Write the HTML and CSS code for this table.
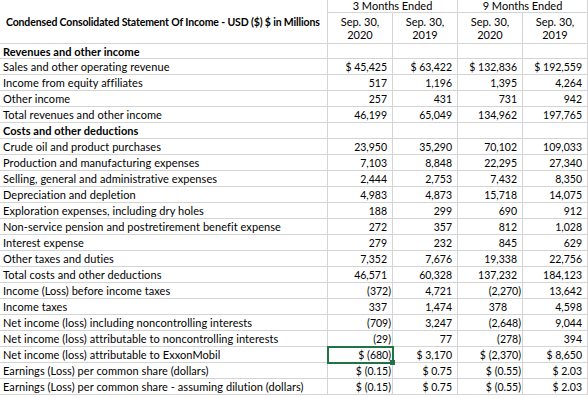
FILE: index.html
```html
<!DOCTYPE html>
<html lang="en">
<head>
<meta charset="utf-8">
<title>Condensed Consolidated Statement Of Income</title>
<link rel="stylesheet" href="styles.css">
</head>
<body>
<div class="sheet">
  <div class="c title">Condensed Consolidated Statement Of Income - USD ($) $ in Millions</div>
  <div class="c grp">3 Months Ended</div>
  <div class="c grp">9 Months Ended</div>
  <div class="c date">Sep. 30,<br>2020</div>
  <div class="c date">Sep. 30,<br>2019</div>
  <div class="c date">Sep. 30,<br>2020</div>
  <div class="c date">Sep. 30,<br>2019</div>

  <div class="c lab b">Revenues and other income</div><div class="c num"></div><div class="c num"></div><div class="c num"></div><div class="c num"></div>
  <div class="c lab">Sales and other operating revenue</div><div class="c num">$ 45,425</div><div class="c num">$ 63,422</div><div class="c num">$ 132,836</div><div class="c num">$ 192,559</div>
  <div class="c lab">Income from equity affiliates</div><div class="c num">517</div><div class="c num">1,196</div><div class="c num">1,395</div><div class="c num">4,264</div>
  <div class="c lab">Other income</div><div class="c num">257</div><div class="c num">431</div><div class="c num">731</div><div class="c num">942</div>
  <div class="c lab">Total revenues and other income</div><div class="c num">46,199</div><div class="c num">65,049</div><div class="c num">134,962</div><div class="c num">197,765</div>
  <div class="c lab b">Costs and other deductions</div><div class="c num"></div><div class="c num"></div><div class="c num"></div><div class="c num"></div>
  <div class="c lab">Crude oil and product purchases</div><div class="c num">23,950</div><div class="c num">35,290</div><div class="c num">70,102</div><div class="c num">109,033</div>
  <div class="c lab">Production and manufacturing expenses</div><div class="c num">7,103</div><div class="c num">8,848</div><div class="c num">22,295</div><div class="c num">27,340</div>
  <div class="c lab">Selling, general and administrative expenses</div><div class="c num">2,444</div><div class="c num">2,753</div><div class="c num">7,432</div><div class="c num">8,350</div>
  <div class="c lab">Depreciation and depletion</div><div class="c num">4,983</div><div class="c num">4,873</div><div class="c num">15,718</div><div class="c num">14,075</div>
  <div class="c lab">Exploration expenses, including dry holes</div><div class="c num">188</div><div class="c num">299</div><div class="c num">690</div><div class="c num">912</div>
  <div class="c lab">Non-service pension and postretirement benefit expense</div><div class="c num">272</div><div class="c num">357</div><div class="c num">812</div><div class="c num">1,028</div>
  <div class="c lab">Interest expense</div><div class="c num">279</div><div class="c num">232</div><div class="c num">845</div><div class="c num">629</div>
  <div class="c lab">Other taxes and duties</div><div class="c num">7,352</div><div class="c num">7,676</div><div class="c num">19,338</div><div class="c num">22,756</div>
  <div class="c lab">Total costs and other deductions</div><div class="c num">46,571</div><div class="c num">60,328</div><div class="c num">137,232</div><div class="c num">184,123</div>
  <div class="c lab">Income (Loss) before income taxes</div><div class="c num neg">(372)</div><div class="c num">4,721</div><div class="c num neg">(2,270)</div><div class="c num">13,642</div>
  <div class="c lab">Income taxes</div><div class="c num">337</div><div class="c num">1,474</div><div class="c num odd">378</div><div class="c num">4,598</div>
  <div class="c lab">Net income (loss) including noncontrolling interests</div><div class="c num neg">(709)</div><div class="c num">3,247</div><div class="c num neg">(2,648)</div><div class="c num">9,044</div>
  <div class="c lab">Net income (loss) attributable to noncontrolling interests</div><div class="c num neg">(29)</div><div class="c num">77</div><div class="c num neg">(278)</div><div class="c num">394</div>
  <div class="c lab">Net income (loss) attributable to ExxonMobil</div><div class="c num neg sel">$ (680)</div><div class="c num">$ 3,170</div><div class="c num neg">$ (2,370)</div><div class="c num">$ 8,650</div>
  <div class="c lab">Earnings (Loss) per common share (dollars)</div><div class="c num neg">$ (0.15)</div><div class="c num">$ 0.75</div><div class="c num neg">$ (0.55)</div><div class="c num">$ 2.03</div>
  <div class="c lab">Earnings (Loss) per common share - assuming dilution (dollars)</div><div class="c num neg">$ (0.15)</div><div class="c num">$ 0.75</div><div class="c num neg">$ (0.55)</div><div class="c num">$ 2.03</div>
</div>
</body>
</html>
```

FILE: styles.css
```css
html, body {
  margin: 0;
  padding: 0;
  background: #ffffff;
}

body {
  font-family: Lato, "Liberation Sans", sans-serif;
  font-size: 10.5px;
  color: #000000;
}

.sheet {
  display: grid;
  grid-template-columns: 328px repeat(4, 65px);
  grid-template-rows: 13px 31px 15px repeat(21, 16px);
}

.c {
  box-sizing: border-box;
  border-right: 1px solid #d4d4d4;
  border-bottom: 1px solid #d4d4d4;
  display: flex;
  align-items: center;
  white-space: nowrap;
}

.title {
  grid-row: 1 / 3;
  font-weight: bold;
  padding-left: 6px;
  letter-spacing: -0.14px;
}

.grp {
  grid-column: span 2;
  justify-content: center;
  font-size: 11px;
  line-height: 12px;
}

.date {
  justify-content: center;
  text-align: center;
  line-height: 13.5px;
  font-size: 11px;
}

.lab {
  padding-left: 3px;
  font-size: 11px;
  letter-spacing: 0.07px;
}

.b {
  font-weight: bold;
}

.num {
  justify-content: flex-end;
  padding-right: 5px;
}

.num.neg {
  padding-right: 1px;
}

.num.odd {
  padding-right: 15px;
}

.sel {
  position: relative;
  z-index: 1;
  outline: 2px solid #217346;
  outline-offset: -1px;
}

.sel::after {
  content: "";
  position: absolute;
  right: -3px;
  bottom: -3px;
  width: 5px;
  height: 5px;
  background: #217346;
}
```
